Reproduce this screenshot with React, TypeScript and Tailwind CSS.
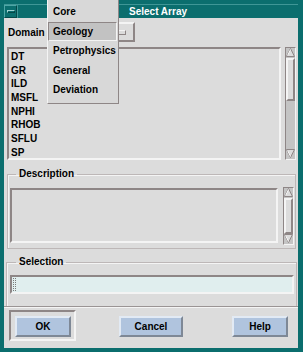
const raised = "border-t-[#f4f4f4] border-l-[#f4f4f4] border-b-[#8e8686] border-r-[#8e8686]";
const sunken = "border-t-[#8e8686] border-l-[#8e8686] border-b-[#f4f4f4] border-r-[#f4f4f4]";

const curves = ["DT", "GR", "ILD", "MSFL", "NPHI", "RHOB", "SFLU", "SP"];
const domains = ["Core", "Geology", "Petrophysics", "General", "Deviation"];

const Arrow = ({ down }: { down?: boolean }) => (
  <svg width="9" height="9" viewBox="0 0 9 9" className="block">
    <polygon
      points={down ? "0.5,0.5 8.5,0.5 4.5,8.5" : "4.5,0.5 8.5,8.5 0.5,8.5"}
      fill="#dcdcdc"
      stroke="#8e8686"
      strokeWidth="1"
    />
    <polyline
      points={down ? "1.5,1.5 4.5,7.5" : "4.5,1.5 1.5,7.5"}
      fill="none"
      stroke="#f4f4f4"
      strokeWidth="1"
    />
  </svg>
);

const ScrollBar = ({ h, slider }: { h: string; slider: string }) => (
  <div className={`flex flex-col w-[11px] ${h} border ${sunken} bg-[#c4c4c4]`}>
    <div className="flex justify-center h-[10px] shrink-0">
      <Arrow />
    </div>
    <div className="flex-1 flex flex-col">
      <div className={`${slider} border-2 ${raised} bg-[#dcdcdc]`} />
    </div>
    <div className="flex justify-center h-[10px] shrink-0">
      <Arrow down />
    </div>
  </div>
);

const Button = ({ label, w }: { label: string; w: string }) => (
  <button
    className={`${w} h-[21px] flex items-center justify-center bg-[#b0c4de] border-2 border-t-[#e2eaf4] border-l-[#e2eaf4] border-b-[#7e8896] border-r-[#7e8896] text-black`}
  >
    {label}
  </button>
);

export default function App() {
  return (
    <div className="relative w-[303px] h-[352px] flex flex-col bg-[#0b6e6e] pl-[4px] pr-[5px] pb-[4px] pt-[4px] font-['Liberation_Sans',Arial,sans-serif] text-[10px] font-bold text-black select-none">
      {/* title bar */}
      <div className="flex h-[14px] border-t border-[#3f9696]">
        <div className="w-[13px] h-[13px] flex items-center justify-center border border-t-[#4fa6a6] border-l-[#4fa6a6] border-b-[#044848] border-r-[#044848]">
          <div className="w-[8px] h-[3px] border border-t-[#9fd2d2] border-l-[#9fd2d2] border-b-[#044848] border-r-[#044848]" />
        </div>
        <div className="flex-1 flex items-center justify-center text-white border-l border-[#3f9696] leading-none">
          Select Array
        </div>
      </div>

      {/* client area */}
      <div className="flex-1 flex flex-col bg-[#dcdcdc]">
        <div className="flex items-center mt-[4px] h-[20px]">
          <span className="ml-[4px] w-[40px]">Domain</span>
          <div className={`w-[87px] h-[20px] border-2 ${raised} flex items-center justify-end pr-[7px]`}>
            <div className={`w-[9px] h-[5px] border ${raised}`} />
          </div>
        </div>

        <div className="flex mt-[5px] ml-[3px] h-[113px]">
          <div className={`w-[274px] h-full border-2 ${sunken} pl-[2px] pt-[1px]`}>
            {curves.map((c) => (
              <div key={c} className="h-[13.7px] leading-[13.7px]">
                {c}
              </div>
            ))}
          </div>
          <div className="ml-[4px]">
            <ScrollBar h="h-[113px]" slider="h-[43px]" />
          </div>
        </div>

        <fieldset className="mt-[8px] ml-[3px] w-[289px] h-[81px] border border-[#bdb7b7] shadow-[inset_1px_1px_0_#f4f4f4]">
          <legend className="ml-[8px] px-[3px] leading-[12px]">Description</legend>
          <div className="flex mt-[7px] ml-[2px]">
            <div className={`w-[268px] h-[55px] mt-[1px] border-2 ${sunken}`} />
            <div className="ml-[5px]">
              <ScrollBar h="h-[58px]" slider="h-[36px]" />
            </div>
          </div>
        </fieldset>

        <fieldset className="mt-[7px] ml-[2px] w-[291px] h-[50px] border border-b-0 border-[#bdb7b7] shadow-[inset_1px_1px_0_#f4f4f4]">
          <legend className="ml-[9px] px-[3px] leading-[12px]">Selection</legend>
          <div className={`mt-[7px] ml-[3px] w-[284px] h-[19px] border-2 ${sunken} bg-[#e0eeee] flex items-center pl-[1px]`}>
            <div className="w-[3px] h-[13px] border-x border-dotted border-[#7a7a7a]" />
          </div>
        </fieldset>

        <div className="h-[2px] border-t border-b border-t-[#9a9494] border-b-[#f4f4f4]" />

        <div className="flex items-center mt-[2px]">
          <div className={`ml-[5px] w-[67px] h-[31px] border-2 ${sunken} flex items-center pl-[4px] pt-[2px]`}>
            <Button label="OK" w="w-[56px]" />
          </div>
          <div className="ml-[43px] pt-[2px]">
            <Button label="Cancel" w="w-[64px]" />
          </div>
          <div className="ml-[49px] pt-[2px]">
            <Button label="Help" w="w-[56px]" />
          </div>
        </div>
      </div>

      {/* posted option menu */}
      <div className={`absolute left-[47px] top-0 w-[72px] h-[104px] bg-[#d8d8d8] border border-t-0 ${raised} pt-[2px]`}>
        {domains.map((d) => (
          <div
            key={d}
            className={`h-[19.5px] flex items-center pl-[4px] ${
              d === "Geology" ? `bg-[#c2c2c2] border ${sunken} mr-[1px]` : "border border-transparent"
            }`}
          >
            {d}
          </div>
        ))}
      </div>
    </div>
  );
}
